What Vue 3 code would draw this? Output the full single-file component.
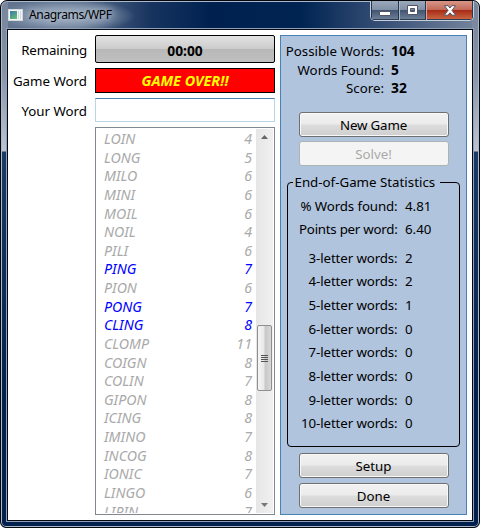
<script setup>
const words = [
  ['LOIN', 4], ['LONG', 5], ['MILO', 6], ['MINI', 6], ['MOIL', 6], ['NOIL', 4], ['PILI', 6],
  ['PING', 7, true], ['PION', 6], ['PONG', 7, true], ['CLING', 8, true], ['CLOMP', 11],
  ['COIGN', 8], ['COLIN', 7], ['GIPON', 8], ['ICING', 8], ['IMINO', 7], ['INCOG', 8],
  ['IONIC', 7], ['LINGO', 6], ['LIPIN', 7],
]
const summary = [['Possible Words:', 104], ['Words Found:', 5], ['Score:', 32]]
const averages = [['% Words found:', '4.81'], ['Points per word:', '6.40']]
const counts = [2, 2, 1, 0, 0, 0, 0, 0]
</script>

<template>
  <div class="window">
    <header class="titlebar">
      <svg class="app-icon" width="15" height="12" viewBox="0 0 15 12">
        <defs>
          <linearGradient id="pane" x1="0" y1="0" x2="0.6" y2="1">
            <stop offset="0" stop-color="#3b78a8" /><stop offset="1" stop-color="#63b77c" />
          </linearGradient>
        </defs>
        <rect x="0.5" y="0.5" width="14" height="11" fill="#f4f5f6" stroke="#d3d8dd" />
        <rect x="2" y="2" width="7" height="8" fill="url(#pane)" />
        <rect x="10" y="2" width="1" height="8" fill="#d5d9dd" />
        <rect x="12" y="2" width="1" height="8" fill="#d5d9dd" />
      </svg>
      <span class="title">Anagrams/WPF</span>
      <div class="controls">
        <span class="ctl min"><svg width="12" height="5" viewBox="0 0 12 5"><rect x="0.5" y="0.5" width="11" height="4" rx="0.5" fill="#fff" stroke="#535666" /></svg></span>
        <span class="ctl max"><svg width="13" height="11" viewBox="0 0 13 11"><path fill="#fff" stroke="#535666" fill-rule="evenodd" d="M1.5 .5h10v9h-10zM4.5 3.5v3h4v-3z" /></svg></span>
        <span class="ctl close"><svg width="14" height="11" viewBox="0 0 14 11"><path fill="#fff" stroke="#535666" d="M1.5 .7h3.6L7 3l1.9-2.3h3.6L9 5.4l3.7 4.8H9L7 7.8l-2 2.4H1.3L5 5.4z" /></svg></span>
      </div>
    </header>
    <main class="client">
      <section class="left">
        <label class="r1">Remaining</label>
        <div class="timer">00:00</div>
        <label class="r2">Game Word</label>
        <div class="over">GAME OVER!!</div>
        <label class="r3">Your Word</label>
        <input class="entry" type="text" />
        <div class="list">
          <ul class="rows">
            <li v-for="w in words" :key="w[0]" :class="{ found: w[2] }"><span>{{ w[0] }}</span><span>{{ w[1] }}</span></li>
          </ul>
          <div class="scroll">
            <svg class="arrow" width="7" height="4" viewBox="0 0 7 4"><path d="M0 4 3.5 0 7 4z" fill="#666" /></svg>
            <div class="thumb"><i></i><i></i><i></i><i></i></div>
            <svg class="arrow" width="7" height="4" viewBox="0 0 7 4"><path d="M0 0h7L3.5 4z" fill="#777" /></svg>
          </div>
        </div>
      </section>
      <aside class="right">
        <dl class="summary">
          <template v-for="s in summary" :key="s[0]"><dt>{{ s[0] }}</dt><dd>{{ s[1] }}</dd></template>
        </dl>
        <button class="btn new">New Game</button>
        <button class="btn solve" disabled>Solve!</button>
        <div class="group">
          <div class="legend"><span>End-of-Game Statistics</span></div>
          <dl class="stats averages">
            <template v-for="a in averages" :key="a[0]"><dt>{{ a[0] }}</dt><dd>{{ a[1] }}</dd></template>
          </dl>
          <dl class="stats counts">
            <template v-for="(c, i) in counts" :key="i"><dt>{{ i + 3 }}-letter words:</dt><dd>{{ c }}</dd></template>
          </dl>
        </div>
        <button class="btn setup">Setup</button>
        <button class="btn done">Done</button>
      </aside>
    </main>
  </div>
</template>

<style>
body { margin: 0; background: #fff; overflow: hidden; }
</style>

<style scoped>
* { box-sizing: border-box; }
.window {
  width: 480px; height: 528px; padding: 0 6px 6px; border: 1px solid #05070c;
  border-radius: 7px 7px 6px 6px; color: #000;
  font: 13.3px/18px "Noto Sans", "Open Sans", sans-serif;
  box-shadow: inset 0 0 0 1px #a9b8ca;
  background:
    linear-gradient(180deg, #76859b 0, #8693a8 70px, #bcc4d1 150px, transparent 151px) 0 0 / 7px 100% no-repeat,
    linear-gradient(180deg, #76859b 0, #8693a8 70px, #bcc4d1 150px, transparent 151px) 100% 0 / 7px 100% no-repeat,
    linear-gradient(180deg, transparent 30px, #022456 31px, #1a3a68 153px, #02204e 400px),
    radial-gradient(ellipse 68px 17px at 66px 15px, rgba(170, 184, 202, .85) 0, rgba(150, 166, 188, .65) 55%, transparent 100%),
    linear-gradient(90deg, #63758f 0, #596d8a 80px, #17345f 150px, #00214f 210px, #002452 300px, #3d547a 390px, #71829a 470px);
}
.titlebar { height: 28px; display: flex; padding: 8px 0 0 1px; }
.app-icon { flex: none; }
.title {
  margin: -3px 0 0 6px; font-size: 12.1px; letter-spacing: -0.4px; height: 19px;
  text-shadow: 0 0 6px #b8c5d5, 0 0 10px #b8c5d5;
}
.controls {
  margin: -8px -1px 0 auto; display: flex; height: 20px; width: 104px;
  border: 1px solid #c5ced9; border-top: 0; border-radius: 0 0 5px 5px; overflow: hidden;
}
.ctl { display: flex; align-items: center; justify-content: center; border-right: 1px solid #26374e; box-shadow: inset 0 -1px 0 #2c3d56; }
.min, .max { background: linear-gradient(#9ba9bb 0, #8090a7 46%, #435671 50%, #71829c 100%); }
.min { width: 28px; padding-top: 5px; border-left: 1px solid #26374e; }
.max { width: 27px; border-left: 1px solid #aab7c7; }
.close { flex: 1; border-left: 1px solid #dba79c; background: linear-gradient(#d89687 0, #c36a59 46%, #a82c17 50%, #cc6b46 100%); }
.client {
  height: 492px; width: 466px; border: 1px solid #05080e; background: #fff;
  box-shadow: 0 0 0 1px #8fa0b8; display: grid; grid-template-columns: 267px 187px; gap: 5px; padding: 5px 0 0;
}
.left { display: grid; grid-template-columns: 79px 180px; column-gap: 8px; grid-template-rows: 28px 25px 24px 388px; row-gap: 5px; align-content: start; }
.left label { text-align: right; align-self: center; white-space: nowrap; padding-top: 1px; }
.left .r1 { letter-spacing: -0.15px; }
.timer, .over { border: 1px solid #000; text-align: center; font-weight: 700; }
.timer { border-radius: 2px; font-size: 13.8px; line-height: 29px; background: linear-gradient(#e3e3e3 0, #cbcbcb 50%, #b8b8b8 51%, #c0c0c0 100%); }
.over { background: #f00; color: #ff0; font-size: 14.4px; font-style: italic; line-height: 24px; }
.entry { border: 1px solid #b9d5e8; border-top-color: #4a83b3; width: 180px; height: 24px; padding: 0 4px; outline: 0; font: inherit; }
.list { grid-column: 2; border: 1px solid #828790; height: 388px; display: flex; padding: 1px; }
.rows { flex: 1; margin: 0; padding: 1px 4px 0 7px; list-style: none; overflow: hidden; font-size: 14.2px; font-style: italic; color: #a9a9a9; }
.rows li { display: flex; justify-content: space-between; height: 18.63px; line-height: 18.63px; }
.rows .found { color: #00f; }
.scroll { width: 17px; background: linear-gradient(90deg, #e6e6e6, #f0f0f0); display: flex; flex-direction: column; align-items: center; padding: 6px 0; }
.arrow { flex: none; }
.thumb {
  margin: 186px 0 auto; width: 15px; height: 66px; border: 1px solid #8f8f8f; border-radius: 2px;
  background: linear-gradient(90deg, #f5f5f5 0, #e8e8e8 45%, #c8c8c8 55%, #d8d8d8 100%);
  display: flex; flex-direction: column; align-items: center; justify-content: center; gap: 1px;
}
.thumb i { width: 7px; height: 1px; background: #555; }
.right { height: 480px; border: 1px solid #4682b4; background: #b0c4de; display: flex; flex-direction: column; align-items: center; }
dl, dd { margin: 0; }
.summary { display: grid; grid-template-columns: 103px auto; grid-auto-rows: 18.6px; column-gap: 7px; justify-content: start; width: 100%; padding-top: 6px; line-height: 18.6px; }
dt { text-align: right; white-space: nowrap; }
.summary dd { font-weight: 700; font-size: 13.8px; }
.btn {
  width: 150px; height: 25px; flex: none; padding: 1px 0 0; border: 1px solid #707070; border-radius: 3px; color: #000;
  background: linear-gradient(#f2f2f2 0, #ebebeb 49%, #dddddd 51%, #cfcfcf 100%); box-shadow: inset 0 0 0 1px #f8f8f8;
  font: inherit; line-height: 22px;
}
.new { margin-top: 14px; letter-spacing: -0.15px; }
.solve { margin-top: 4px; background: #f4f4f4; border-color: #adb2b5; color: #aaa; box-shadow: none; }
.group { margin: 16px 0 6px -1px; width: 173px; height: 265px; flex: none; border: 1px solid #000; border-radius: 4px; }
.legend { margin: -10px 0 0 5px; height: 20px; }
.legend span { background: #b0c4de; padding: 0 2px; display: inline-block; width: 147px; white-space: nowrap; line-height: 18px; }
.stats { display: grid; grid-template-columns: 110px auto; column-gap: 7.5px; }
.stats dt { letter-spacing: -0.12px; }
.averages { grid-auto-rows: 23px; line-height: 23px; padding-top: 2px; }
.averages dt:last-of-type { letter-spacing: -0.25px; }
.counts { grid-auto-rows: 23.65px; line-height: 23.65px; padding-top: 6px; }
.done { margin-top: 5px; }
</style>
